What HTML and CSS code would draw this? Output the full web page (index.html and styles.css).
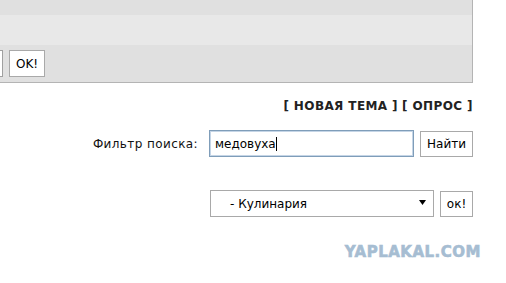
FILE: index.html
```html
<!DOCTYPE html>
<html lang="ru">
<head>
<meta charset="utf-8">
<title>Форум</title>
<link rel="stylesheet" href="styles.css">
</head>
<body>
<div class="page">
  <div class="panel">
    <div class="band band-top"></div>
    <div class="band band-mid"></div>
    <div class="band band-bottom">
      <span class="cut-input"></span>
      <button class="btn btn-ok">OK!</button>
    </div>
  </div>

  <div class="actions">
    <a class="action" href="#">[ НОВАЯ ТЕМА ]</a>
    <a class="action" href="#">[ ОПРОС ]</a>
  </div>

  <div class="filter">
    <label class="filter-label">Фильтр поиска:</label>
    <div class="search-input">медовуха<span class="caret"></span></div>
    <button class="btn btn-find">Найти</button>
  </div>

  <div class="jump">
    <div class="select">
      <span class="select-text">- Кулинария</span>
      <svg class="select-arrow" width="7" height="5" viewBox="0 0 7 5"><path d="M0 0H7L3.5 5Z" fill="#000"/></svg>
    </div>
    <button class="btn btn-go">ок!</button>
  </div>

  <div class="logo">YAPLAKAL.COM</div>
</div>
</body>
</html>
```
FILE: styles.css
```css
html, body {
  margin: 0;
  padding: 0;
  background: #fff;
}
body {
  font-family: "DejaVu Sans", Verdana, sans-serif;
  font-size: 12px;
  color: #000;
}
.page {
  width: 473px;
  display: flex;
  flex-direction: column;
}
.panel {
  border-right: 1px solid #b4b4b4;
  border-bottom: 1px solid #b4b4b4;
  display: flex;
  flex-direction: column;
}
.band-top {
  height: 15px;
  background: #e0e0e0;
}
.band-mid {
  height: 30px;
  background: #e8e8e8;
}
.band-bottom {
  height: 37px;
  background: #e0e0e0;
  display: flex;
  align-items: center;
  gap: 6px;
}
.cut-input {
  width: 2px;
  height: 25px;
  background: #fff;
  border: 1px solid #a0a0a0;
  border-left: none;
}
.btn {
  font-family: "DejaVu Sans", Verdana, sans-serif;
  font-size: 12px;
  color: #000;
  background: #fff;
  border: 1px solid #a9a9a9;
  padding: 0;
  margin: 0;
  display: flex;
  align-items: center;
  justify-content: center;
}
.btn-ok {
  width: 36px;
  height: 27px;
  font-size: 12px;
}
.actions {
  margin-top: 16px;
  display: flex;
  justify-content: flex-end;
  gap: 4px;
  font-size: 12px;
  font-weight: bold;
  line-height: 15px;
  letter-spacing: 0.4px;
}
.action {
  color: #222;
  text-decoration: none;
}
.filter {
  margin-top: 16px;
  display: flex;
  align-items: center;
  justify-content: flex-end;
  height: 27px;
}
.filter-label {
  font-size: 12px;
  margin-right: 11px;
  color: #111;
  letter-spacing: 0.4px;
}
.search-input {
  box-sizing: border-box;
  width: 205px;
  height: 27px;
  border: 1px solid #7f9db9;
  box-shadow: 0 0 0 1px #c5d5e6 inset;
  padding-left: 5px;
  display: flex;
  align-items: center;
  font-size: 12px;
}
.caret {
  width: 1px;
  height: 14px;
  background: #000;
}
.btn-find {
  margin-left: 6px;
  width: 53px;
  height: 26px;
  box-sizing: border-box;
}
.jump {
  margin-top: 33px;
  display: flex;
  justify-content: flex-end;
  align-items: center;
  height: 27px;
}
.select {
  box-sizing: border-box;
  width: 224px;
  height: 27px;
  border: 1px solid #a9a9a9;
  display: flex;
  align-items: center;
  justify-content: space-between;
  padding: 0 7px 0 19px;
  font-size: 12px;
}
.select-arrow {
  display: block;
  margin-top: -3px;
}
.btn-go {
  margin-left: 6px;
  width: 33px;
  height: 26px;
  box-sizing: border-box;
}
.logo {
  margin-top: 28px;
  align-self: flex-end;
  margin-right: -8px;
  font-family: "DejaVu Sans", sans-serif;
  font-weight: bold;
  font-size: 15px;
  line-height: 15px;
  color: #a6bdd2;
  letter-spacing: 0.5px;
  -webkit-text-stroke: 0.6px #a6bdd2;
}
```
